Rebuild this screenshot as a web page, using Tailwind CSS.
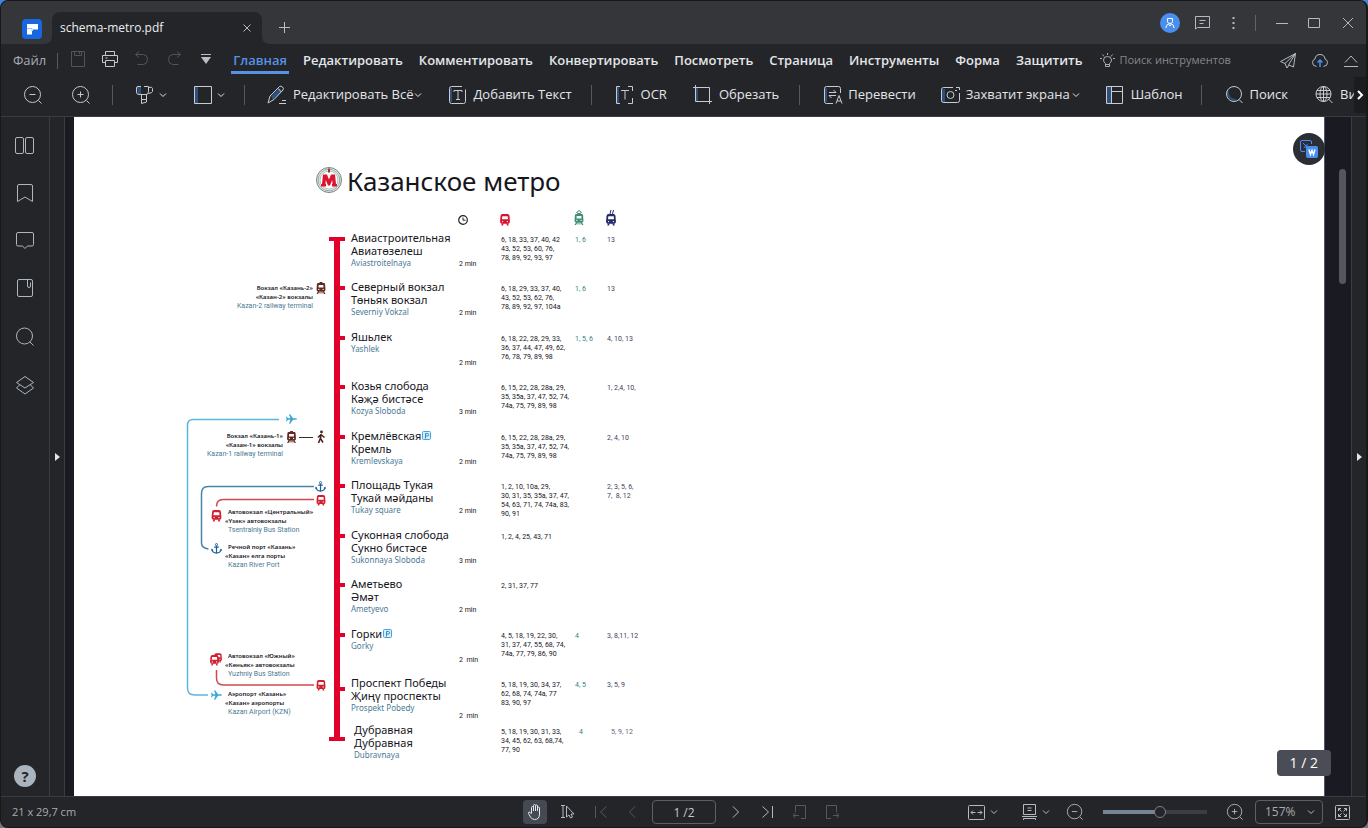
<!DOCTYPE html>
<html lang="ru">
<head>
    <meta charset="UTF-8">
    <meta name="viewport" content="width=device-width, initial-scale=1.0">
    <title>schema-metro.pdf</title>
    <script src="https://cdn.jsdelivr.net/npm/@tailwindcss/browser@4"></script>
</head>
<body class="h-screen overflow-hidden bg-linear-to-b from-[#3f86d8] to-[#77777b] font-['Open_Sans','Noto_Sans',sans-serif] text-[#e3e5e8]">

<!-- Общие значки -->
<svg class="hidden" aria-hidden="true">
    <symbol id="chevron" viewBox="0 0 8 8"><path d="M1 2.5 4 5.5 7 2.5" fill="none" stroke="currentColor"/></symbol>
    <symbol id="zoomOut" viewBox="0 0 20 20" fill="none" stroke="currentColor"><circle cx="9.5" cy="9.5" r="8"/><path d="M6.5 9.5h6M15.5 15.5l3 3"/></symbol>
    <symbol id="zoomIn" viewBox="0 0 20 20" fill="none" stroke="currentColor"><circle cx="9.5" cy="9.5" r="8"/><path d="M6.5 9.5h6M9.5 6.5v6M15.5 15.5l3 3"/></symbol>
    <symbol id="bus" viewBox="0 0 10 12">
        <path d="M2.5 0h5Q9.3 0 9.5 2l.4 5.5q0 2-1.4 2.200H1.5Q.1 9.5.1 7.5L.5 2Q.7 0 2.5 0Z" fill="currentColor"/>
        <path d="M2 9.5h1.700L3 11.500H1.200ZM8 9.500H6.300l.7 2h1.800Z" fill="currentColor"/>
        <path d="M2.300 2.200h5.400l.3 3H2Z" fill="#fff"/><circle cx="2.600" cy="7.600" r=".7" fill="#fff"/><circle cx="7.400" cy="7.600" r=".7" fill="#fff"/>
    </symbol>
    <symbol id="train" viewBox="0 0 10 14">
        <path d="M3.500 0h3v1h1.700q1 0 1.200 1.500L9.800 8q0 2-1.500 2.200L9.800 13H8.300L8 12.200H2L1.700 13H.2L1.700 10.200Q.2 10 .2 8L.6 2.500Q.8 1 1.800 1h1.700Z" fill="currentColor"/>
        <path d="M2.500 3.200h5l.2 2.600H2.300ZM2.800 10.600h4.400l.4.800H2.400Z" fill="#fff"/><circle cx="2.700" cy="8" r=".7" fill="#fff"/><circle cx="7.300" cy="8" r=".7" fill="#fff"/>
    </symbol>
    <symbol id="anchor" viewBox="0 0 12 12"><path d="M6 3v8M3.500 4.500h5M1 7.200q.7 3.500 5 3.800 4.300-.3 5-3.800" fill="none" stroke="currentColor" stroke-width="1.300"/><circle cx="6" cy="1.800" r="1.200" fill="none" stroke="currentColor"/><path d="M0 8.500.8 6l2 1.800ZM12 8.500 11.200 6l-2 1.800Z" fill="currentColor"/></symbol>
    <symbol id="plane" viewBox="0 0 12 12"><path d="M12 6q0-.9-1.500-.9H7.700L4.500.8H3.300l1.500 4.300H2.200L1 3.600H0L.7 6 0 8.400h1l1.200-1.500h2.600L3.300 11.200h1.200l3.200-4.300h2.800Q12 6.900 12 6Z" fill="currentColor"/></symbol>
    <symbol id="parking" viewBox="0 0 9 9"><rect x=".5" y=".5" width="8" height="8" rx="1" fill="#d5eefa" stroke="#45a5d8"/><path d="M3.500 7.500v-5h2q1 0 1 1.250t-1 1.250h-2" fill="none" stroke="#2b8fc8"/></symbol>
</svg>

<div class="flex h-full flex-col overflow-hidden rounded-lg border border-r-2 border-[#17181c] bg-[#232529]">

    <!-- Заголовок окна -->
    <header class="flex h-[43px] shrink-0 items-end bg-[#35363a] pr-3">
        <div class="mb-[5px] ml-[21px] flex size-5 items-center justify-center rounded bg-[#1768e0]">
            <svg class="size-5" viewBox="0 0 20 20"><path d="M5 5h11v5.500h-5V12H10v3.500H5Z" fill="#fff"/><path d="M5 9.500h5V12" fill="none" stroke="#9cc3ff"/></svg>
        </div>
        <svg class="ml-[2px] size-2" viewBox="0 0 8 8"><path d="M8 0v8H0Q8 8 8 0Z" fill="#232529"/></svg>
        <div class="flex h-8 w-[210px] items-center justify-between rounded-t-lg bg-[#232529] pr-[11px] pl-2">
            <span class="text-[12px] text-[#eceef0]">schema-metro.pdf</span>
            <button aria-label="Закрыть вкладку"><svg class="size-2" viewBox="0 0 8 8"><path d="M.5.5l7 7M7.500.5l-7 7" stroke="#b9bcc2"/></svg></button>
        </div>
        <svg class="size-2" viewBox="0 0 8 8"><path d="M0 0v8h8Q0 8 0 0Z" fill="#232529"/></svg>
        <button aria-label="Новая вкладка" class="mb-[11px] ml-[9px]"><svg class="size-[11px]" viewBox="0 0 11 11"><path d="M5.500 0v11M0 5.500h11" stroke="#b9bcc2"/></svg></button>
        <div class="mb-[11px] ml-auto flex h-5 items-center text-[#b4bac3]">
            <button aria-label="Профиль" class="flex size-5 items-center justify-center rounded-full bg-[#4a8ff0]"><svg class="size-3" viewBox="0 0 12 12" fill="none" stroke="#fff"><path d="M3.500 1.500h5v3q0 2-2.500 2t-2.500-2ZM2 11q0-3.500 2.500-4L6 9l1.500-2q2.500.5 2.500 4"/></svg></button>
            <button aria-label="Сообщения" class="ml-[15px]"><svg class="h-[14px] w-[15px]" viewBox="0 0 15 14" fill="none" stroke="currentColor"><path d="M.5 13V.5h14v11H2.500ZM4.500 4.500h6M4.500 7.500h4"/></svg></button>
            <button aria-label="Меню" class="ml-[22px]"><svg class="h-3 w-[3px]" viewBox="0 0 3 12" fill="currentColor"><path d="M.5 0h2v2h-2zM.5 5h2v2h-2zM.5 10h2v2h-2z"/></svg></button>
            <span class="ml-[20px] h-4 w-px bg-[#606268]"></span>
            <button aria-label="Свернуть" class="ml-[20px]"><svg class="size-3" viewBox="0 0 12 12"><path d="M0 6.500h12" stroke="currentColor"/></svg></button>
            <button aria-label="Развернуть" class="ml-[20px]"><svg class="h-[10px] w-3" viewBox="0 0 12 10"><path d="M.5.5h11v9H.5Z" fill="none" stroke="currentColor"/></svg></button>
            <button aria-label="Закрыть" class="ml-[22px]"><svg class="size-3" viewBox="0 0 12 12"><path d="M1 1l10 10M11 1 1 11" stroke="currentColor"/></svg></button>
        </div>
    </header>

    <!-- Меню -->
    <div class="flex h-[33px] shrink-0 items-center pr-2 pl-3 text-[13px] whitespace-nowrap">
        <button class="text-[#a9abb0]">Файл</button>
        <span class="ml-[11px] h-4 w-px bg-[#55585e]"></span>
        <div class="ml-[12px] flex items-center gap-4 pb-1 text-[#50545b]">
            <button aria-label="Сохранить"><svg class="size-4" viewBox="0 0 16 16" fill="none" stroke="currentColor"><path d="M1.500.5h13v15h-13ZM4.500.5v4h7v-4M9.500 1v2"/></svg></button>
            <button aria-label="Печать" class="text-[#c3c8cf]"><svg class="size-4" viewBox="0 0 16 16" fill="none" stroke="currentColor"><path d="M3.500 4.500v-4h9v4M3.500 11.500h-3v-7h15v7h-3M3.500 9.500h9v6h-9ZM3.500 7h2"/></svg></button>
            <button aria-label="Отменить"><svg class="size-4" viewBox="0 0 16 16" fill="none" stroke="currentColor"><path d="M5 0.500 1.500 3.500 5 6.500M1.500 3.500h8q4 .5 4 5t-4 5H3.500"/></svg></button>
            <button aria-label="Повторить"><svg class="size-4" viewBox="0 0 16 16" fill="none" stroke="currentColor"><path d="M11 .5l3.500 3L11 6.500M14.500 3.500h-8q-4 .5-4 5t4 5h6"/></svg></button>
            <button aria-label="Настроить панель" class="text-[#b8bec6]"><svg class="size-4" viewBox="0 0 16 16"><path d="M3 3.500h10" stroke="currentColor"/><path d="M3 6h10l-5 7Z" fill="currentColor"/></svg></button>
        </div>
        <nav class="ml-[19px] flex h-full gap-4 pt-px font-semibold">
            <button class="relative text-[#5792e6]">Главная<span class="absolute -inset-x-[2px] bottom-[3px] h-[3px] bg-[#5792e6]"></span></button>
            <button>Редактировать</button>
            <button>Комментировать</button>
            <button>Конвертировать</button>
            <button>Посмотреть</button>
            <button>Страница</button>
            <button>Инструменты</button>
            <button>Форма</button>
            <button>Защитить</button>
        </nav>
        <button class="ml-[18px] flex items-center gap-1 text-[11px] text-[#85878c]">
            <svg class="size-[15px] text-[#a9adb3]" viewBox="0 0 15 15" fill="none" stroke="currentColor"><path d="M5.500 10.500q-2-1.500-2-3.500 0-3.500 4-3.500t4 3.500q0 2-2 3.500v3h-4ZM5.500 11.500h4M7.500 0v2M2.500 1.500l1.500 2M12.500 1.500l-1.500 2M0 5.500h2M13 5.500h2"/></svg>
            Поиск инструментов
        </button>
        <div class="ml-auto flex items-center gap-4 text-[#b4bac3]">
            <button aria-label="Поделиться"><svg class="size-4" viewBox="0 0 16 16" fill="none" stroke="currentColor"><path d="M15.500.5.5 8.500l4.500 2 2 4.500 2-3 4.500 2ZM15.500.5 5 10.500M15.500.5 8.500 12"/></svg></button>
            <button aria-label="Облако"><svg class="size-4" viewBox="0 0 16 16" fill="none" stroke="currentColor"><path d="M4.500 13.500q-4-.5-4-4 0-2.500 2.500-3.500.5-4.500 5-4.500t5 4.500q2.500 1 2.500 3.500 0 3.500-4 4"/><path d="M8 14V7M5.500 9.500 8 7l2.500 2.500" stroke="#4a8ff0" stroke-width="1.500"/></svg></button>
            <button aria-label="Свернуть панель"><svg class="h-4 w-[14px]" viewBox="0 0 14 16" fill="none" stroke="currentColor"><path d="M1 9.500l6-6.500 6 6.500M0 13.500h14"/></svg></button>
        </div>
    </div>

    <!-- Панель инструментов -->
    <div class="relative flex h-10 shrink-0 items-center overflow-hidden border-b border-[#3a3c41] pb-1 pl-[22px] text-[13px] whitespace-nowrap">
        <button aria-label="Уменьшить" class="shrink-0 text-[#c3c8cf]"><svg class="size-5"><use href="#zoomOut"/></svg></button>
        <button aria-label="Увеличить" class="ml-7 shrink-0 text-[#c3c8cf]"><svg class="size-5"><use href="#zoomIn"/></svg></button>
        <span class="mr-[22px] ml-[21px] h-5 w-px shrink-0 bg-[#55585e]"></span>
        <div class="flex shrink-0 gap-[26px]">
            <button aria-label="Выделение" class="flex items-center gap-1"><svg class="size-5" viewBox="0 0 20 20" fill="none" stroke="#c8ccd2"><path d="M2 2h4v7H3Z" fill="#2f4f7d" stroke="none"/><path d="M6 1.500H3q-1.500 0-1.500 1.500v4q0 2.500 2.500 2.500h7q2.500 0 2.500-3v-5H9M13.500 2.500q4-1 4 1v3q-.5 1.500-4 2M6.500 9.500v5h5v-5M6.500 14.500v4l5-1.500v-2.500"/></svg><svg class="size-2"><use href="#chevron"/></svg></button>
            <button aria-label="Фигура" class="flex items-center gap-1"><svg class="size-5" viewBox="0 0 20 20"><path d="M2 2h3v16H2Z" fill="#2f4f7d"/><path d="M1.500 1.500h17v17h-17Z" fill="none" stroke="#c8ccd2"/></svg><svg class="size-2"><use href="#chevron"/></svg></button>
        </div>
        <span class="mr-[22px] ml-[19px] h-5 w-px shrink-0 bg-[#55585e]"></span>
        <div class="flex shrink-0 gap-[26px]">
            <button class="flex items-center"><svg class="mr-[6px] size-5" viewBox="0 0 20 20" fill="none" stroke="#c8ccd2"><path d="M4 11 12 3l3 3-9 9Z" fill="#2f4f7d" stroke="none"/><path d="M1 18l2-7L12.500 1.500q1.500-1 3 .5t.5 3L7 14.500ZM12 18.500h7M15 15.500h4M11 3.500l3.500 3.500"/></svg>Редактировать Всё<svg class="ml-px size-2"><use href="#chevron"/></svg></button>
            <button class="flex items-center gap-[5px]"><svg class="size-5" viewBox="0 0 20 20" fill="none" stroke="#c8ccd2"><path d="M2 3h2v14H2Z" fill="#2f4f7d" stroke="none"/><path d="M14 1.500H3.500q-2 0-2 2v13q0 2 2 2h12q2 0 2-2v-12M6 7V5.500h8V7M10 5.500v9M8 14.500h4"/></svg>Добавить Текст</button>
        </div>
        <span class="mr-[23px] ml-[19px] h-5 w-px shrink-0 bg-[#55585e]"></span>
        <div class="flex shrink-0 gap-[26px]">
            <button class="flex items-center gap-[6px]"><svg class="size-5" viewBox="0 0 20 20" fill="none" stroke="#c8ccd2"><path d="M2 2h2v16H2Z" fill="#2f4f7d" stroke="none"/><path d="M5 1.500H1.500v17H5M13 1.500h4.500V6M17.500 13v5.500H13M6 5.500h8M10 5.500v9"/></svg>OCR</button>
            <button class="flex items-center gap-[6px]"><svg class="size-5" viewBox="0 0 20 20" fill="none" stroke="#c8ccd2"><path d="M3 3h2v13H3Z" fill="#2f4f7d" stroke="none"/><path d="M2.500 0v16.500H19M0 2.500h16.500V19"/></svg>Обрезать</button>
        </div>
        <span class="mr-[23px] ml-[20px] h-5 w-px shrink-0 bg-[#55585e]"></span>
        <div class="flex shrink-0 gap-[25px]">
            <button class="flex items-center gap-[5px]"><svg class="size-5" viewBox="0 0 20 20" fill="none" stroke="#c8ccd2"><path d="M2 3h2v14H2Z" fill="#2f4f7d" stroke="none"/><path d="M17.500 8V3.500q0-2-2-2h-12q-2 0-2 2v13q0 2 2 2H10M6 7.500h7L10.500 5M13 10.500H6L8.500 13M13 18.500l3-8 3 8M14 16h4"/></svg>Перевести</button>
            <button class="flex items-center gap-[5px]"><svg class="size-5" viewBox="0 0 20 20" fill="none" stroke="#c8ccd2"><path d="M1 4h3v13H1Z" fill="#2f4f7d" stroke="none"/><path d="M12 2.500H2.500q-2 0-2 2v11q0 2 2 2h14q2 0 2-2V8M15 2.500h3.500V5M14 5.500h2"/><circle cx="9.500" cy="10" r="3.500"/></svg>Захватит экрана<svg class="-ml-[3px] size-2"><use href="#chevron"/></svg></button>
            <button class="flex items-center gap-[6px]"><svg class="size-5" viewBox="0 0 20 20" fill="none" stroke="#c8ccd2"><path d="M2 2h4v16H2Z" fill="#2f4f7d" stroke="none"/><path d="M1.500 1.500h16v17h-16ZM6.500 1.500v17M6.500 6.500h11"/></svg>Шаблон</button>
        </div>
        <span class="mr-[22px] ml-[18px] h-5 w-px shrink-0 bg-[#55585e]"></span>
        <div class="flex shrink-0 gap-[26px]">
            <button class="flex items-center gap-[6px]"><svg class="size-5" viewBox="0 0 20 20" fill="none" stroke="#c8ccd2"><path d="M3.500 6q0 8 8 9" stroke="#2f4f7d" stroke-width="2"/><circle cx="10" cy="9" r="7.500"/><path d="M15 14.500l3.500 3.500"/></svg>Поиск</button>
            <button class="flex items-center gap-[6px]"><svg class="size-5" viewBox="0 0 20 20" fill="none" stroke="#c8ccd2"><circle cx="9.500" cy="9" r="7.500"/><ellipse cx="9.500" cy="9" rx="3.500" ry="7.500"/><path d="M9.500 1.500v15M3 5.500h13M3 12.500h13M2 9h15M14.500 14l4 4"/></svg>Википедия</button>
        </div>
        <button aria-label="Ещё" class="absolute top-0 right-0 flex h-9 w-3 items-center justify-center bg-[#1b1c20]"><svg class="h-3 w-2" viewBox="0 0 8 12"><path d="M2 2l4 4-4 4" fill="none" stroke="#fff" stroke-width="2"/></svg></button>
    </div>

    <!-- Рабочая область -->
    <main class="flex min-h-0 flex-1">
        <aside class="flex w-[49px] shrink-0 flex-col items-center border-r border-[#3a3c41] pt-[18px] pb-[9px] text-[#aeb7c1]">
            <div class="flex flex-col gap-7">
                <button aria-label="Миниатюры"><svg class="size-5" viewBox="0 0 20 20" fill="none" stroke="currentColor"><rect x=".5" y="2.500" width="8" height="16" rx="1.500"/><rect x="10.500" y="2.500" width="8" height="16" rx="1.500"/></svg></button>
                <button aria-label="Закладки"><svg class="size-5" viewBox="0 0 20 20" fill="none" stroke="currentColor"><path d="M2.500 18.500V3q0-1.500 1.500-1.500h12q1.500 0 1.500 1.500v15.500L10 14Z"/></svg></button>
                <button aria-label="Комментарии"><svg class="size-5" viewBox="0 0 20 20" fill="none" stroke="currentColor"><path d="M3 1.500h14q1.500 0 1.500 1.500v10.500q0 1.500-1.500 1.500h-4.500L10 17.500 7.500 15H3q-1.500 0-1.500-1.500V3Q1.500 1.500 3 1.500Z"/></svg></button>
                <button aria-label="Вложения"><svg class="size-5" viewBox="0 0 20 20" fill="none" stroke="currentColor"><rect x="2.500" y=".5" width="15" height="17" rx="1.500"/><path d="M12.500 1v6q0 1.500 1.500 1.500T15.500 7V3.500"/></svg></button>
                <button aria-label="Поиск"><svg class="size-5" viewBox="0 0 20 20" fill="none" stroke="currentColor"><circle cx="9.500" cy="9" r="8"/><path d="M15 15l3.500 3.500"/></svg></button>
                <button aria-label="Слои"><svg class="size-5" viewBox="0 0 20 20" fill="none" stroke="currentColor"><path d="M10 1.500 18.500 7.500 10 13 1.500 7.500ZM4.500 10l-3 3L10 19l8.500-6-3-3"/></svg></button>
            </div>
            <button aria-label="Справка" class="mt-auto flex size-[22px] items-center justify-center rounded-full bg-[#aab4be] text-[15px] font-bold text-[#232529]">?</button>
        </aside>
        <button aria-label="Показать панель" class="flex w-[15px] shrink-0 items-center justify-center border-r border-[#3a3c41]"><svg class="h-2 w-[5px]" viewBox="0 0 5 8"><path d="M0 0l5 4-5 4Z" fill="#e3e5e8"/></svg></button>

        <div class="relative flex min-w-0 flex-1 bg-[#191a22] pl-[9px]">
            <!-- Страница документа -->
            <article class="relative min-w-0 flex-1 overflow-hidden border-r border-[#53566a] bg-white font-['Noto_Sans',sans-serif] text-[#16161d]">
                <header class="flex items-center gap-[5px] pt-[46px] pl-[242px]">
                    <svg class="-mt-[2px] size-[26px]" viewBox="0 0 26 26">
                        <circle cx="13" cy="13" r="12.500" fill="#e8eeec" stroke="#71827e"/>
                        <circle cx="13" cy="13" r="10.800" fill="none" stroke="#9aa8a4"/>
                        <circle cx="13" cy="13" r="9" fill="#fff" stroke="#b4bfbc"/>
                        <path d="M12 1.500h2v4h-2Z" fill="#8c3a35"/>
                        <path d="M7 7.500h4L13 12.500 15 7.500h4l1 9.500h1v2.500h-5V17h.5l-.3-4-2.200 5.500h-2L9.800 13l-.3 4h.5v2.500H5V17h1Z" fill="#dd1430"/>
                    </svg>
                    <h1 class="text-[26px] leading-9">Казанское метро</h1>
                </header>

                <table class="mt-[10px] ml-[277px] table-fixed text-left text-[7px] leading-[9px]">
                    <thead>
                    <tr class="h-[22px] align-top">
                        <th class="w-[108px]" aria-label="Станция"></th>
                        <th class="w-[42px]"><svg aria-label="Время" class="mt-[6px] -ml-px size-[10px]" viewBox="0 0 10 10" fill="none" stroke="#222"><circle cx="5" cy="5" r="4.300" stroke-width="1.200"/><path d="M5 2.500V5.200H7.500"/></svg></th>
                        <th class="w-[74px]"><svg aria-label="Автобус" class="mt-[5px] -ml-px h-3 w-[10px] text-[#d9122e]"><use href="#bus"/></svg></th>
                        <th class="w-8"><svg aria-label="Трамвай" class="mt-px -ml-px h-4 w-[10px] text-[#3d8f74]" viewBox="0 0 10 16"><path d="M2.500 2.500 5 .5l2.500 2L5 4Z" fill="none" stroke="currentColor"/><use href="#train" y="3" width="10" height="13"/></svg></th>
                        <th class="w-[60px]"><svg aria-label="Троллейбус" class="mt-px -ml-px h-4 w-[10px] text-[#232a6b]" viewBox="0 0 10 16"><path d="M4 4l1-4M6.500 4l1-4" stroke="currentColor"/><use href="#bus" y="4" width="10" height="12"/></svg></th>
                    </tr>
                    </thead>
                    <tbody class="align-top [&_td]:font-['Roboto']">
                    <tr class="h-[49px]">
                        <th class="text-[11px] leading-[13px] font-normal">Авиастроительная<br>Авиатөзелеш<div class="text-[8px] leading-[11px] text-[#4a7a94]">Aviastroitelnaya</div></th>
                        <td class="pt-[29px]">2 min</td>
                        <td class="pt-[5px] whitespace-pre">6, 18, 33, 37, 40, 42
43, 52, 53, 60, 76,
78, 89, 92, 93, 97</td>
                        <td class="pt-[5px] text-[#2d8580]">1, 6</td>
                        <td class="pt-[5px] text-[#40415c]">13</td>
                    </tr>
                    <tr class="h-[50px]">
                        <th class="text-[11px] leading-[13px] font-normal">Северный вокзал<br>Төньяк вокзал<div class="text-[8px] leading-[11px] text-[#4a7a94]">Severniy Vokzal</div></th>
                        <td class="pt-[29px]">2 min</td>
                        <td class="pt-[5px] whitespace-pre">6, 18, 29, 33, 37, 40,
43, 52, 53, 62, 76,
78, 89, 92, 97, 104a</td>
                        <td class="pt-[5px] text-[#2d8580]">1, 6</td>
                        <td class="pt-[5px] text-[#40415c]">13</td>
                    </tr>
                    <tr class="h-[49px]">
                        <th class="text-[11px] leading-[13px] font-normal">Яшьлек<div class="text-[8px] leading-[11px] text-[#4a7a94]">Yashlek</div></th>
                        <td class="pt-[29px]">2 min</td>
                        <td class="pt-[5px] whitespace-pre">6, 18, 22, 28, 29, 33,
36, 37, 44, 47, 49, 62,
76, 78, 79, 89, 98</td>
                        <td class="pt-[5px] text-[#2d8580]">1, 5, 6</td>
                        <td class="pt-[5px] text-[#40415c]">4, 10, 13</td>
                    </tr>
                    <tr class="h-[50px]">
                        <th class="text-[11px] leading-[13px] font-normal">Козья слобода<br>Кәҗә бистәсе<div class="text-[8px] leading-[11px] text-[#4a7a94]">Kozya Sloboda</div></th>
                        <td class="pt-[29px]">3 min</td>
                        <td class="pt-[5px] whitespace-pre">6, 15, 22, 28, 28a, 29,
35, 35a, 37, 47, 52, 74,
74a, 75, 79, 89, 98</td>
                        <td></td>
                        <td class="pt-[5px] text-[#40415c]">1, 2,4, 10,</td>
                    </tr>
                    <tr class="h-[49px]">
                        <th class="text-[11px] leading-[13px] font-normal"><div class="flex items-center gap-px">Кремлёвская<svg aria-label="Парковка" class="size-[9px]"><use href="#parking"/></svg></div>Кремль<div class="text-[8px] leading-[11px] text-[#4a7a94]">Kremlevskaya</div></th>
                        <td class="pt-[29px]">2 min</td>
                        <td class="pt-[5px] whitespace-pre">6, 15, 22, 28, 28a, 29,
35, 35a, 37, 47, 52, 74,
74a, 75, 79, 89, 98</td>
                        <td></td>
                        <td class="pt-[5px] text-[#40415c]">2, 4, 10</td>
                    </tr>
                    <tr class="h-[50px]">
                        <th class="text-[11px] leading-[13px] font-normal">Площадь Тукая<br>Тукай мәйданы<div class="text-[8px] leading-[11px] text-[#4a7a94]">Tukay square</div></th>
                        <td class="pt-[29px]">2 min</td>
                        <td class="pt-[5px] whitespace-pre">1, 2, 10, 10a, 29,
30, 31, 35, 35a, 37, 47,
54, 63, 71, 74, 74a, 83,
90, 91</td>
                        <td></td>
                        <td class="pt-[5px] whitespace-pre text-[#40415c]">2, 3, 5, 6,
7,  8, 12</td>
                    </tr>
                    <tr class="h-[49px]">
                        <th class="text-[11px] leading-[13px] font-normal">Суконная слобода<br>Сукно бистәсе<div class="text-[8px] leading-[11px] text-[#4a7a94]">Sukonnaya Sloboda</div></th>
                        <td class="pt-[29px]">3 min</td>
                        <td class="pt-[5px]">1, 2, 4, 25, 43, 71</td>
                        <td></td>
                        <td></td>
                    </tr>
                    <tr class="h-[50px]">
                        <th class="text-[11px] leading-[13px] font-normal">Аметьево<br>Әмәт<div class="text-[8px] leading-[11px] text-[#4a7a94]">Ametyevo</div></th>
                        <td class="pt-[29px]">2 min</td>
                        <td class="pt-[5px]">2, 31, 37, 77</td>
                        <td></td>
                        <td></td>
                    </tr>
                    <tr class="h-[49px]">
                        <th class="text-[11px] leading-[13px] font-normal"><div class="flex items-center gap-px">Горки<svg aria-label="Парковка" class="size-[9px]"><use href="#parking"/></svg></div><div class="text-[8px] leading-[11px] text-[#4a7a94]">Gorky</div></th>
                        <td class="pt-[29px] whitespace-pre">2  min</td>
                        <td class="pt-[5px] whitespace-pre">4, 5, 18, 19, 22, 30,
31, 37, 47, 55, 68, 74,
74a, 77, 79, 86, 90</td>
                        <td class="pt-[5px] text-[#2d8580]">4</td>
                        <td class="pt-[5px] text-[#40415c]">3, 8,11, 12</td>
                    </tr>
                    <tr class="h-[47px]">
                        <th class="text-[11px] leading-[13px] font-normal">Проспект Победы<br>Җиңү проспекты<div class="text-[8px] leading-[11px] text-[#4a7a94]">Prospekt Pobedy</div></th>
                        <td class="pt-9 whitespace-pre">2  min</td>
                        <td class="pt-[5px] whitespace-pre">5, 18, 19, 30, 34, 37,
62, 68, 74, 74a, 77
83, 90, 97</td>
                        <td class="pt-[5px] text-[#2d8580]">4, 5</td>
                        <td class="pt-[5px] text-[#40415c]">3, 5, 9</td>
                    </tr>
                    <tr>
                        <th class="pl-[3px] text-[11px] leading-[13px] font-normal">Дубравная<br>Дубравная<div class="text-[8px] leading-[11px] text-[#4a7a94]">Dubravnaya</div></th>
                        <td></td>
                        <td class="pt-[5px] whitespace-pre">5, 18, 19, 30, 31, 33,
34, 45, 62, 63, 68,74,
77, 90</td>
                        <td class="pt-[5px] pl-1 text-[#2d8580]">4</td>
                        <td class="pt-[5px] pl-1 text-[#66677a]">5, 9, 12</td>
                    </tr>
                    </tbody>
                </table>

                <!-- Линия метро и пересадки -->
                <svg class="absolute top-0 left-0 h-[679px] w-[280px]" viewBox="74 117 280 679" fill="none" aria-hidden="true">
                    <g fill="#e2002b">
                        <path d="M334 237h6v504h-6ZM329 237h16v4h-16ZM329 737h16v4h-16Z"/>
                        <path d="M340 286h5v4h-5zM340 336h5v4h-5zM340 385h5v4h-5zM340 435h5v4h-5zM340 484h5v4h-5zM340 534h5v4h-5zM340 583h5v4h-5zM340 633h5v4h-5zM340 687h5v4h-5z"/>
                    </g>
                    <path d="M279 419.500H193q-5.500 0-5.500 6V688q0 7 7 7H208" stroke="#5cb6dc" stroke-width="1.500"/>
                    <path d="M314 486.500H208q-6.500 0-6.500 7V543q0 5 7 6" stroke="#4a83ac" stroke-width="1.500"/>
                    <path d="M314 499.500H223q-6.500 0-6.500 7" stroke="#cf4a50" stroke-width="1.500"/>
                    <path d="M216.500 670v8q0 7 7 7H314" stroke="#cf4a50" stroke-width="1.500"/>
                    <path d="M299 437.500h14" stroke="#3c2a26"/>
                    <g color="#3aa5d8"><use href="#plane" x="286" y="413" width="11" height="12"/><use href="#plane" x="211" y="689" width="11" height="12"/></g>
                    <g color="#1d5d94"><use href="#anchor" x="315" y="481" width="11" height="11"/><use href="#anchor" x="211" y="543" width="11" height="11"/></g>
                    <g color="#5f2a20"><use href="#train" x="316" y="282" width="10" height="13"/><use href="#train" x="286" y="431" width="11" height="13"/></g>
                    <g color="#d1202f"><use href="#bus" x="316" y="495" width="10" height="11"/><use href="#bus" x="211" y="510" width="11" height="12"/><use href="#bus" x="316" y="680" width="10" height="11"/><use href="#bus" x="214" y="653" width="8" height="10"/><use href="#bus" x="210" y="655" width="9" height="11"/></g>
                    <circle cx="321.500" cy="432" r="1.400" fill="#4a2018"/>
                    <path d="M321 434l-.5 4.500 2.500 4M320.500 438l-2 5M321 434.500l-3 3M321.500 435l3 2.500" stroke="#4a2018" stroke-width="1.500"/>
                </svg>

                <!-- Подписи пересадок -->
                <div class="text-[6px] leading-[9px] font-semibold whitespace-nowrap [&_small]:block [&_small]:font-['Roboto'] [&_small]:text-[7px] [&_small]:font-normal [&_small]:text-[#4a7a94]">
                    <p class="absolute top-[167px] left-[99px] w-[140px] text-right">Вокзал «Казань-2»<br>«Казан-2» вокзалы<small>Kazan-2 railway terminal</small></p>
                    <p class="absolute top-[315px] left-[69px] w-[140px] text-right">Вокзал «Казань-1»<br>«Казан-1» вокзалы<small>Kazan-1 railway terminal</small></p>
                    <p class="absolute top-[391px] left-[151px] indent-[3px]">Автовокзал «Центральный»<br>«Үзәк» автовокзалы<small>Tsentralniy Bus Station</small></p>
                    <p class="absolute top-[426px] left-[151px] indent-[3px]">Речной порт «Казань»<br>«Казан» елга порты<small>Kazan River Port</small></p>
                    <p class="absolute top-[535px] left-[151px] indent-[3px]">Автовокзал «Южный»<br>«Көньяк» автовокзалы<small>Yuzhniy Bus Station</small></p>
                    <p class="absolute top-[573px] left-[151px] indent-[3px]">Аэропорт «Казань»<br>«Казан» аэропорты<small>Kazan Airport (KZN)</small></p>
                </div>
            </article>
            <div class="w-[26px] shrink-0"><div class="mt-[52px] ml-[14px] h-[115px] w-[7px] rounded-full bg-[#55565e]"></div></div>

            <button aria-label="Преобразовать в Word" class="absolute top-4 right-[26px] flex size-8 items-center justify-center rounded-full bg-[#2c2e36]">
                <svg class="size-5" viewBox="0 0 20 20" fill="none" stroke="#4a8ff0"><path d="M6 12.500H3q-1.500 0-1.500-1.500V3Q1.500 1.500 3 1.500h8q1.500 0 1.500 1.500v2M4 4l4 4M8 5v3H5"/><rect x="7.500" y="7.500" width="11" height="11" rx="1" fill="#4a8ff0"/><path d="M10 10.500l1.500 5 1.500-4 1.500 4 1.500-5" stroke="#fff" stroke-width="1.500"/></svg>
            </button>
            <span class="absolute right-5 bottom-5 rounded bg-[#4b4d56] px-[13px] py-px text-[14px] leading-6 text-white">1 / 2</span>
        </div>
        <button aria-label="Показать свойства" class="flex w-[15px] shrink-0 items-center justify-center border-l border-[#3a3c41]"><svg class="h-2 w-[5px]" viewBox="0 0 5 8"><path d="M0 0l5 4-5 4Z" fill="#e3e5e8"/></svg></button>
    </main>

    <!-- Строка состояния -->
    <footer class="flex h-[31px] shrink-0 items-center border-t border-[#3a3c41] pr-4 pl-[11px] text-[12px] text-[#a9abb0]">
        <span class="flex-1 text-[11px]">21 x 29,7 cm</span>
        <div class="flex items-center text-[#b4bac3]">
            <button aria-label="Рука" class="flex size-6 items-center justify-center rounded-sm bg-[#454951]"><svg class="size-4" viewBox="0 0 16 16" fill="none" stroke="#e3e5e8"><path d="M4.500 9V3.500q0-1 1-1t1 1V7M6.500 7V1.500q0-1 1-1t1 1V7M8.500 7V2q0-1 1-1t1 1v5M10.500 7V4q0-1 1-1t1 1v6q0 5.500-5 5.500-2.500 0-4-2.500L1.500 9.500q-.5-1 .5-1.500 1-.3 2.500 2"/></svg></button>
            <button aria-label="Выбор" class="ml-[14px]"><svg class="h-4 w-[14px]" viewBox="0 0 14 16" fill="none" stroke="currentColor"><path d="M0 1.500h4M2 1.500v12M0 13.500h4M5.500 2v11l2.500-2 1.500 3 2-1-1.500-3h3Z"/></svg></button>
            <button aria-label="Первая страница" class="ml-[20px] text-[#55585e]"><svg class="size-3" viewBox="0 0 12 12" fill="none" stroke="currentColor"><path d="M.5 0v12M11.500.5 5.500 6l6 5.500"/></svg></button>
            <button aria-label="Предыдущая страница" class="ml-[21px] text-[#55585e]"><svg class="h-3 w-2" viewBox="0 0 8 12" fill="none" stroke="currentColor"><path d="M7 .5 1.500 6 7 11.500"/></svg></button>
            <input aria-label="Страница" value="1 /2" class="ml-4 h-6 w-16 rounded-sm border border-[#5c5f66] bg-transparent text-center text-[12px] text-[#c3c6cb]">
            <button aria-label="Следующая страница" class="ml-4"><svg class="h-3 w-2" viewBox="0 0 8 12" fill="none" stroke="currentColor"><path d="M1 .5 6.500 6 1 11.500"/></svg></button>
            <button aria-label="Последняя страница" class="ml-[22px]"><svg class="size-3" viewBox="0 0 12 12" fill="none" stroke="currentColor"><path d="M.5.5 6.500 6l-6 5.500M10.500 0v12"/></svg></button>
            <button aria-label="Назад" class="ml-[19px] text-[#55585e]"><svg class="size-[14px]" viewBox="0 0 14 14" fill="none" stroke="currentColor"><path d="M2.500 7V.5h10v13H8M0 10.500h6M2.500 8 0 10.500 2.500 13"/></svg></button>
            <button aria-label="Вперёд" class="ml-[18px] text-[#55585e]"><svg class="size-[14px]" viewBox="0 0 14 14" fill="none" stroke="currentColor"><path d="M11.500 7V.5h-10v13H6M8 10.500h6M11.500 8l2.500 2.500-2.500 2.500"/></svg></button>
        </div>
        <div class="flex flex-1 items-center justify-end text-[#b4bac3]">
            <button aria-label="По ширине" class="flex items-center gap-[5px]"><svg class="h-[15px] w-[17px]" viewBox="0 0 17 15" fill="none" stroke="currentColor"><rect x=".5" y=".5" width="16" height="14" rx="1"/><path d="M3 7.500h4.500M9.500 7.500H14M5 5.500l-2 2 2 2M12 5.500l2 2-2 2"/></svg><svg class="size-2"><use href="#chevron"/></svg></button>
            <button aria-label="Режим просмотра" class="ml-6 flex items-center gap-[5px]"><svg class="h-4 w-[15px]" viewBox="0 0 15 16" fill="none" stroke="currentColor"><path d="M1.500.5h12v10h-12ZM5.500 4h4M5.500 6.500h4M0 12.500h15M1.500 16v-1.500h12V16"/></svg><svg class="size-2"><use href="#chevron"/></svg></button>
            <button aria-label="Уменьшить" class="ml-4"><svg class="size-[18px]"><use href="#zoomOut"/></svg></button>
            <input type="range" aria-label="Масштаб" min="0" max="100" value="55" class="mx-[19px] h-3 w-[104px] appearance-none bg-linear-to-r from-[#748494] from-50% to-[#3a3d43] to-50% bg-[length:100%_4px] bg-center bg-no-repeat [&::-webkit-slider-thumb]:size-3 [&::-webkit-slider-thumb]:appearance-none [&::-webkit-slider-thumb]:rounded-full [&::-webkit-slider-thumb]:border [&::-webkit-slider-thumb]:border-[#7d828a] [&::-webkit-slider-thumb]:bg-[#232529]">
            <button aria-label="Увеличить"><svg class="size-[18px]"><use href="#zoomIn"/></svg></button>
            <div class="relative ml-[11px] h-6">
                <select aria-label="Процент масштаба" class="h-6 w-[68px] appearance-none rounded-sm border border-[#5c5f66] pl-[9px] text-[12px] text-[#a9abb0]"><option>157%</option></select>
                <svg class="pointer-events-none absolute top-2 right-2 size-2"><use href="#chevron"/></svg>
            </div>
            <button aria-label="Во весь экран" class="ml-3"><svg class="size-[15px]" viewBox="0 0 15 15" fill="none" stroke="currentColor"><rect x=".5" y=".5" width="14" height="14" rx="1"/><path d="M3.500 6V3.500H6M9 3.500h2.500V6M11.500 9v2.500H9M6 11.500H3.500V9M3.500 3.500l3 3M11.500 3.500l-3 3M11.500 11.500l-3-3M3.500 11.500l3-3"/></svg></button>
        </div>
    </footer>
</div>
</body>
</html>
